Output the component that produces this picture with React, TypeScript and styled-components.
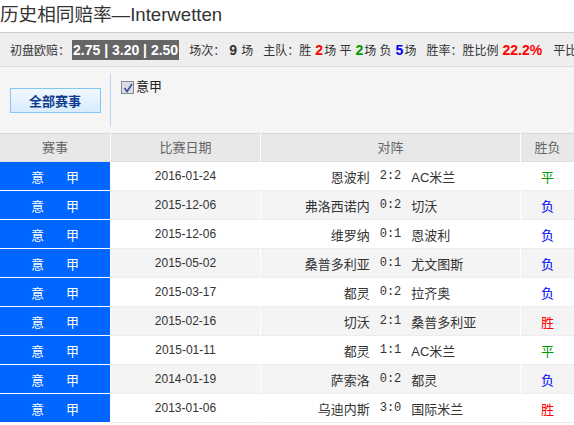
import React from "react";
import styled, { createGlobalStyle } from "styled-components";

const Global = createGlobalStyle`
  html, body { margin: 0; padding: 0; background: #fff; }
  body { font-family: "Liberation Sans", "Noto Sans CJK SC", sans-serif; color: #333; overflow: hidden; }
`;

const Page = styled.div`
  width: 574px;
  height: 425px;
  overflow: hidden;
`;

const Title = styled.h2`
  margin: 0;
  height: 32px;
  line-height: 30px;
  font-size: 18.6px;
  font-weight: normal;
  color: #333;
  white-space: nowrap;
`;

const OddsBar = styled.div`
  display: flex;
  align-items: center;
  height: 33px;
  border-top: 1px solid #cfcfcf;
  border-bottom: 1px solid #dcdcdc;
  background: #eeeeee;
  padding-left: 10px;
  font-size: 12px;
  color: #333;
  white-space: nowrap;
  overflow: hidden;
`;

const Group = styled.span`
  margin-right: 10px;
  flex-shrink: 0;
  display: inline-flex;
  align-items: center;
  gap: 0;
`;

const OddsBox = styled.span`
  display: inline-block;
  background: #666;
  color: #fff;
  font-size: 14px;
  font-weight: bold;
  padding: 2px 1px;
  margin-left: 2px;
  line-height: 16px;
`;

const Num = styled.b<{ $c?: string }>`
  color: ${(p) => p.$c || "#333"};
  font-size: 14px;
  margin: 0 1px 0 4px;
`;

const FilterPanel = styled.div`
  display: flex;
  height: 66px;
  background: #f5f5f5;
`;

const ButtonCell = styled.div`
  width: 110px;
  display: flex;
  align-items: center;
  justify-content: center;
`;

const AllButton = styled.button`
  width: 91px;
  height: 25px;
  border: 1px solid #85c6f3;
  background: linear-gradient(#f1f8ff, #d9ecfd);
  color: #0d3b8e;
  font-family: "Liberation Sans", "Noto Sans CJK SC", sans-serif;
  font-size: 13px;
  font-weight: bold;
  padding: 0;
`;

const Divider = styled.div`
  width: 1px;
  margin: 6px 0;
  background: #bcd6ef;
`;

const CheckLabel = styled.label`
  display: flex;
  align-items: flex-start;
  gap: 2px;
  padding: 12px 0 0 10px;
  font-size: 13px;
  color: #222;
  line-height: 15px;
`;

const FakeBox = styled.span`
  width: 11px;
  height: 11px;
  margin-top: 2px;
  border: 1px solid #8a8a8a;
  background: #dcdce4;
  display: flex;
  align-items: center;
  justify-content: center;
`;

const Table = styled.div`
  display: grid;
  grid-template-columns: 110px 149px 259px 53px;
  column-gap: 1px;
  background: #fff;
`;

const HeadCell = styled.div`
  height: 27px;
  line-height: 27px;
  border-top: 1px solid #d8d8d8;
  border-bottom: 1px solid #dedede;
  background: #e8e8e8;
  color: #666;
  font-size: 13px;
  text-align: center;
`;

const Cell = styled.div<{ $alt: boolean }>`
  height: 28px;
  border-bottom: 1px solid #ececec;
  background: ${(p) => (p.$alt ? "#f4f4f4" : "#fff")};
  display: flex;
  align-items: center;
  justify-content: center;
  font-size: 13px;
  color: #333;
`;

const LeagueCell = styled.div`
  height: 28px;
  border-bottom: 1px solid #fff;
  background: #0066ff;
  color: #fff;
  font-size: 13px;
  display: flex;
  align-items: center;
  justify-content: center;
  gap: 22px;
`;

const DateText = styled.span`
  font-size: 12px;
  color: #333;
`;

const Team = styled.span<{ $side: "home" | "away" }>`
  width: 110px;
  text-align: ${(p) => (p.$side === "home" ? "right" : "left")};
  white-space: nowrap;
`;

const Score = styled.span`
  width: 42px;
  text-align: center;
  font-family: "Liberation Mono", "DejaVu Sans Mono", monospace;
  font-size: 12px;
`;

const Result = styled.span<{ $c: string }>`
  color: ${(p) => p.$c};
  font-size: 13px;
`;

const resultColor: Record<string, string> = { 胜: "#ff0000", 平: "#009900", 负: "#0000ff" };

const rows = [
  ["2016-01-24", "恩波利", "2:2", "AC米兰", "平"],
  ["2015-12-06", "弗洛西诺内", "0:2", "切沃", "负"],
  ["2015-12-06", "维罗纳", "0:1", "恩波利", "负"],
  ["2015-05-02", "桑普多利亚", "0:1", "尤文图斯", "负"],
  ["2015-03-17", "都灵", "0:2", "拉齐奥", "负"],
  ["2015-02-16", "切沃", "2:1", "桑普多利亚", "胜"],
  ["2015-01-11", "都灵", "1:1", "AC米兰", "平"],
  ["2014-01-19", "萨索洛", "0:2", "都灵", "负"],
  ["2013-01-06", "乌迪内斯", "3:0", "国际米兰", "胜"],
];

export default function App() {
  return (
    <Page>
      <Global />
      <Title>历史相同赔率—Interwetten</Title>
      <OddsBar>
        <Group>
          初盘欧赔：<OddsBox>2.75 | 3.20 | 2.50</OddsBox>
        </Group>
        <Group>
          场次：<Num>9</Num>&nbsp;场
        </Group>
        <Group>
          主队：胜<Num $c="#ff0000">2</Num>场&nbsp;平<Num $c="#009900">2</Num>场&nbsp;负<Num $c="#0000ff">5</Num>场
        </Group>
        <Group>
          胜率：胜比例<Num $c="#ff0000">22.2%</Num>
        </Group>
        <Group>平比例</Group>
      </OddsBar>
      <FilterPanel>
        <ButtonCell>
          <AllButton>全部赛事</AllButton>
        </ButtonCell>
        <Divider />
        <CheckLabel>
          <FakeBox>
            <svg width="10" height="10" viewBox="0 0 10 10">
              <path d="M1.5 5 L4 8.5 L9 1" fill="none" stroke="#3b4b9c" strokeWidth="1.6" />
            </svg>
          </FakeBox>
          意甲
        </CheckLabel>
      </FilterPanel>
      <Table>
        <HeadCell>赛事</HeadCell>
        <HeadCell>比赛日期</HeadCell>
        <HeadCell>对阵</HeadCell>
        <HeadCell>胜负</HeadCell>
        {rows.map((r, i) => {
          const alt = i % 2 === 1;
          return (
            <React.Fragment key={i}>
              <LeagueCell>
                <span>意</span>
                <span>甲</span>
              </LeagueCell>
              <Cell $alt={alt}>
                <DateText>{r[0]}</DateText>
              </Cell>
              <Cell $alt={alt}>
                <Team $side="home">{r[1]}</Team>
                <Score>{r[2]}</Score>
                <Team $side="away">{r[3]}</Team>
              </Cell>
              <Cell $alt={alt}>
                <Result $c={resultColor[r[4]]}>{r[4]}</Result>
              </Cell>
            </React.Fragment>
          );
        })}
      </Table>
    </Page>
  );
}
